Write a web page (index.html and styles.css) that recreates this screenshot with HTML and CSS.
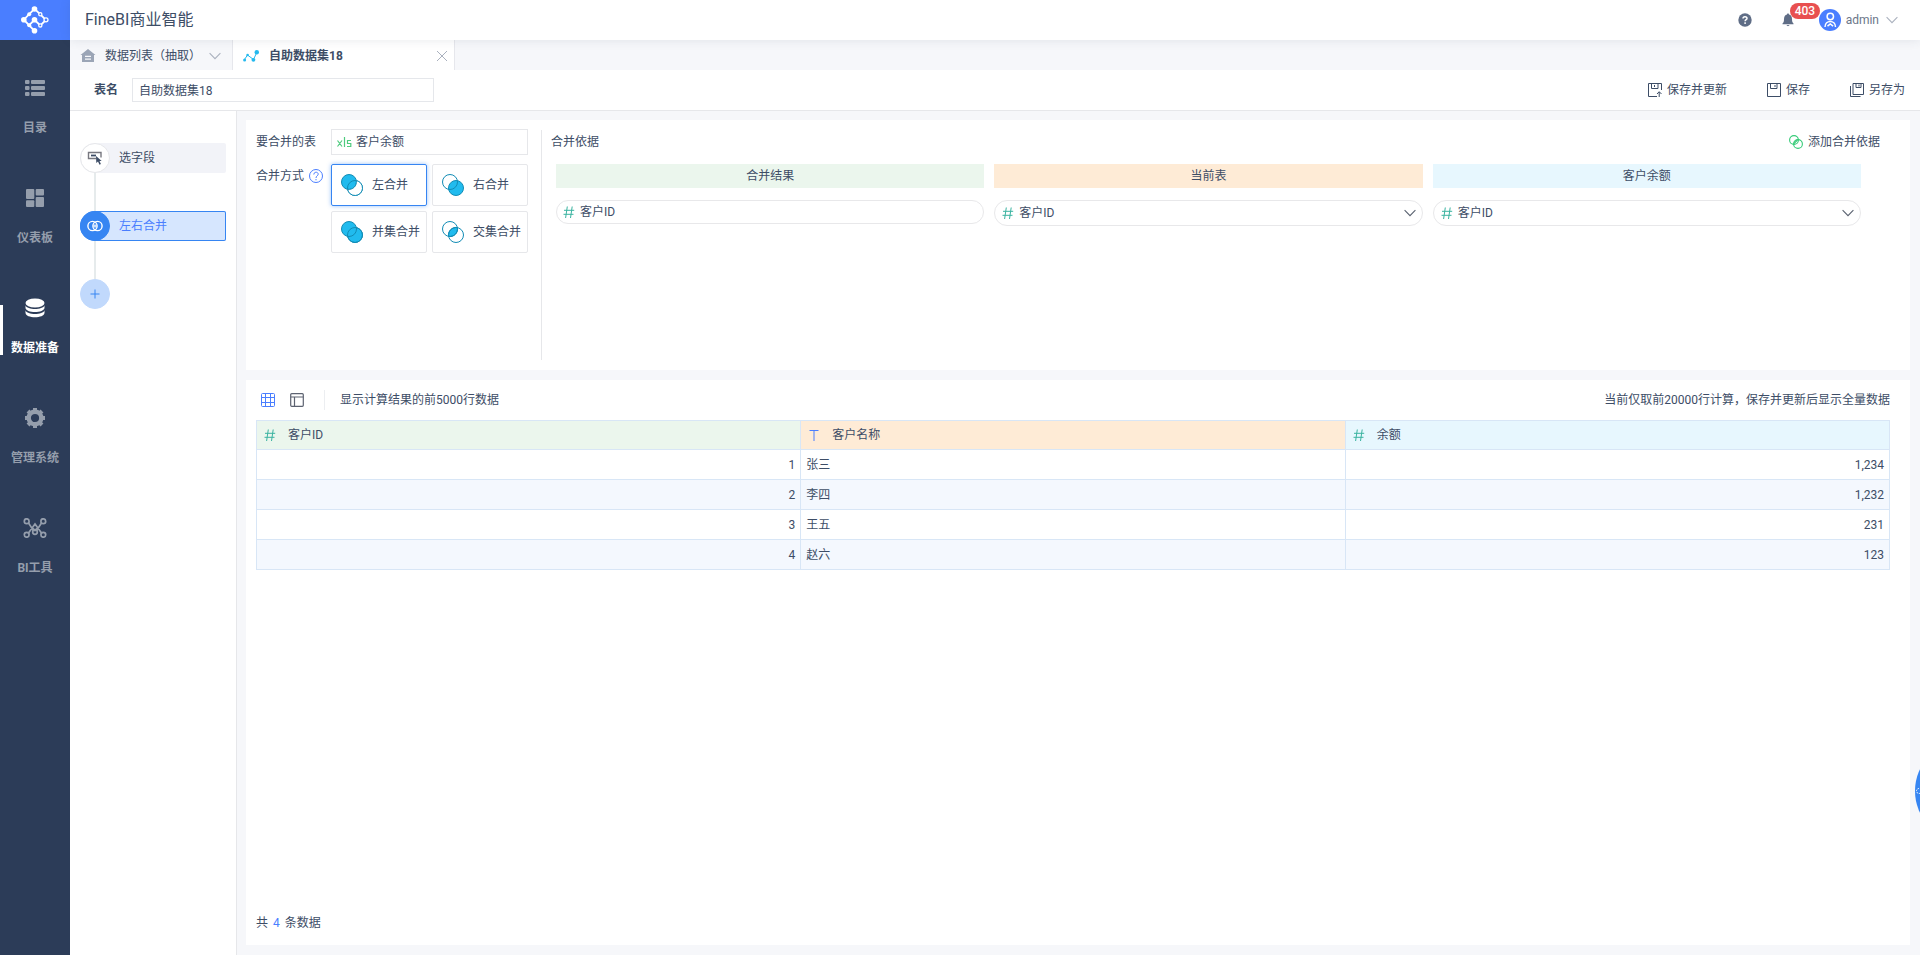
FILE: index.html
```html
<!DOCTYPE html>
<html lang="zh-CN">
<head>
<meta charset="utf-8">
<title>FineBI商业智能</title>
<link rel="stylesheet" href="styles.css">
</head>
<body>
<svg class="defs" aria-hidden="true">
  <symbol id="hash" viewBox="0 0 12 12"><path d="M4.300.500 2.600 12M9.200.500 7.500 12M1 4.300h10.200M.5 8.300h10" fill="none" stroke="currentColor"/></symbol>
  <symbol id="chevron" viewBox="0 0 12 8"><path d="M.6 1.200 6 6.600l5.400-5.400" fill="none" stroke="currentColor" stroke-width="1.100"/></symbol>
</svg>
<div class="app">
  <aside class="sidebar">
    <a class="logo" href="#" aria-label="FineBI">
      <svg width="28" height="28" viewBox="0 0 28 28" fill="none" stroke="#fff" stroke-width="1.800"><path d="M19.300 8.300 13.500 2.800 2.800 13.700 13.500 24.800M19.300 8.300 25 14l-5.700 5.500-5.800-5.700-5.300 5.400"/><g fill="#fff" stroke="none"><circle cx="13.500" cy="3" r="2.800"/><circle cx="8.200" cy="8.300" r="2"/><circle cx="2.800" cy="13.700" r="2.800"/><circle cx="8.200" cy="19.200" r="2"/><circle cx="13.500" cy="24.700" r="2.800"/><circle cx="13.500" cy="13.800" r="2.800"/></g><g fill="#4a7eff" stroke-width="1.300"><circle cx="19.300" cy="8.300" r="1.600"/><circle cx="25" cy="13.800" r="2"/><circle cx="19.300" cy="19.400" r="1.600"/></g></svg>
    </a>
    <nav class="nav">
      <a class="nav-item" href="#"><svg width="20" height="16" viewBox="0 0 20 16" fill="currentColor"><rect width="4.500" height="4" rx="1"/><rect x="6" width="14" height="4" rx="1"/><rect y="6" width="4.500" height="4" rx="1"/><rect x="6" y="6" width="14" height="4" rx="1"/><rect y="12" width="4.500" height="4" rx="1"/><rect x="6" y="12" width="14" height="4" rx="1"/></svg><span>目录</span></a>
      <a class="nav-item" href="#"><svg width="18" height="18" viewBox="0 0 18 18" fill="currentColor"><rect width="8.300" height="10" rx="1"/><rect x="9.700" width="8.300" height="6.500" rx="1"/><rect y="11.300" width="8.300" height="6.700" rx="1"/><rect x="9.700" y="8" width="8.300" height="10" rx="1"/></svg><span>仪表板</span></a>
      <a class="nav-item active" href="#"><svg width="20" height="20" viewBox="0 0 20 20" fill="currentColor"><ellipse cx="10" cy="5" rx="9.500" ry="4.600"/><path d="M.5 7.200C2 12.300 18 12.300 19.500 7.200v2.600c0 5.700-19 5.700-19 0z"/><path d="M.5 12.200c1.500 5.100 17.500 5.100 19 0v2.600c0 6-19 6-19 0z"/></svg><span>数据准备</span></a>
      <a class="nav-item" href="#"><svg width="20" height="20" viewBox="0 0 20 20"><circle cx="10" cy="10" r="6.300" fill="none" stroke="currentColor" stroke-width="4.400"/><path d="M10 0v3M10 17v3M0 10h3M17 10h3M3 3l2 2M15 15l2 2M3 17l2-2M15 5l2-2" stroke="currentColor" stroke-width="4"/></svg><span>管理系统</span></a>
      <a class="nav-item" href="#"><svg width="24" height="20" viewBox="0 0 24 20" fill="none" stroke="currentColor" stroke-width="1.700"><circle cx="3.700" cy="3.200" r="2.400"/><circle cx="20.300" cy="3.200" r="2.400"/><circle cx="3.700" cy="16.800" r="2.400"/><circle cx="20.300" cy="16.800" r="2.400"/><circle cx="12" cy="14" r="2.300"/><path d="M5.500 5 10.300 12.400M18.500 5 13.700 12.400M5.500 15l6.500-9 6.500 9M9 9.500l3 3 3-3"/></svg><span>BI工具</span></a>
    </nav>
  </aside>
  <div class="main">
    <header class="header">
      <h1>FineBI商业智能</h1>
      <div class="account">
        <button class="icon-btn help" aria-label="帮助"><svg width="14" height="14" viewBox="0 0 14 14"><circle cx="7" cy="7" r="6.700" fill="#5f6d86"/><path d="M5 5.600c0-2.500 4-2.500 4-.2C9 6.700 7.100 6.700 7.100 8.300" fill="none" stroke="#fff" stroke-width="1.500"/><rect x="6.300" y="9.300" width="1.600" height="1.600" fill="#fff"/></svg></button>
        <button class="icon-btn bell" aria-label="消息"><svg width="12" height="14" viewBox="0 0 12 14" fill="#5f6d86"><path d="M6 .5c.8 0 1 .6 1 1 2 .5 3 2.200 3 4.500 0 2.700.5 3.500 1.500 4.500v.8H.5v-.8C1.500 9.500 2 8.700 2 6c0-2.300 1-4 3-4.500 0-.4.2-1 1-1zM4.300 12h3.400L6 13.200z"/></svg><span class="badge">403</span></button>
        <button class="user"><svg width="22" height="22" viewBox="0 0 22 22"><circle cx="11" cy="11" r="11" fill="#4a7eff"/><g fill="none" stroke="#fff" stroke-width="1.500"><circle cx="11.300" cy="7.500" r="3.200"/><path d="M6 18c0-7.500 10.500-7.500 10.500 0M8.500 17.200l2.800-2.300 2.800 2.300"/></g></svg><span>admin</span><svg class="muted" width="12" height="8"><use href="#chevron"/></svg></button>
      </div>
    </header>
    <div class="tabs">
      <button class="tab"><svg width="16" height="14" viewBox="0 0 16 14"><path d="M8 0 15.500 6H14v7H2V6H.5z" fill="#9ba5b6"/><path d="M5 7.300h6M5 10.200h6" stroke="#f6f7fa" stroke-width="1.200"/></svg><span>数据列表（抽取）</span><svg class="muted" width="12" height="8"><use href="#chevron"/></svg></button>
      <button class="tab current"><svg width="16" height="12" viewBox="0 0 16 12"><path d="M1.500 9.500 4.500 5l6 4.500L14 2" fill="none" stroke="#24b9ee"/><g fill="#24b9ee"><circle cx="1.600" cy="10" r="1.500"/><circle cx="4.600" cy="5" r="1.300"/><circle cx="10.400" cy="9.800" r="1.900"/><circle cx="13.800" cy="2.200" r="2.200"/></g></svg><span>自助数据集18</span><svg class="muted close" width="12" height="12" viewBox="0 0 12 12"><path d="m1 1 10 10M11 1 1 11" stroke="currentColor"/></svg></button>
    </div>
    <div class="toolbar">
      <label for="name">表名</label>
      <input id="name" type="text" value="自助数据集18">
      <div class="actions">
        <button><svg width="14" height="14" viewBox="0 0 14 14" fill="none" stroke="currentColor"><path d="M9 13.500H.5V.5h13V7M3.500.5v5H10v-5M6.500 2v2M11.200 14V9M9 11l2.200-2.300 2.300 2.300"/></svg>保存并更新</button>
        <button><svg width="14" height="14" viewBox="0 0 14 14" fill="none" stroke="currentColor"><path d="M.5.5h13v13H.5zM3.500.5v5H10v-5M8 2v2"/></svg>保存</button>
        <button><svg width="14" height="14" viewBox="0 0 14 14" fill="none" stroke="currentColor"><path d="M3 .5h10.500v11H3zM6 .5v4h5v-4M9 1.500v2M.5 3v10.500h10"/></svg>另存为</button>
      </div>
    </div>
    <div class="body">
      <aside class="steps">
        <button class="step"><i><svg width="16" height="14" viewBox="0 0 16 14"><path d="M9 7.500H1.500v-6h12.500v5" fill="none" stroke="#77777f" stroke-width="1.400"/><path d="M4 4.500h5" stroke="#3d4d66" stroke-width="1.800"/><path d="m9 5 .3 7 1.700-1.500 1.500 3.200 1.400-.7-1.400-3h2.200z" fill="#3d4d66"/></svg></i><span>选字段</span></button>
        <button class="step selected"><i><svg width="16" height="12" viewBox="0 0 16 12" fill="none" stroke="#fff" stroke-width="1.400"><circle cx="5.500" cy="6" r="4.600"/><circle cx="10.500" cy="6" r="4.600"/><path d="M6.300 6h3.400M8 4.300v3.400" stroke-width="1"/></svg></i><span>左右合并</span></button>
        <button class="step add" aria-label="添加步骤"><i><svg width="10" height="10" viewBox="0 0 10 10"><path d="M5 .5v9M.5 5h9" stroke="#3685f2"/></svg></i></button>
      </aside>
      <main class="content">
        <section class="panel merge">
          <div class="form">
            <label for="table">要合并的表</label>
            <div class="table-box"><svg width="15" height="12" viewBox="0 0 15 12" fill="none" stroke="#4fcb7f" stroke-width="1.200"><path d="m.5 4.500 4.500 6M5 4.500l-4.500 6M7.500 1v10M14 4.500h-3.500v3h3.300v3H10"/></svg><input id="table" type="text" value="客户余额" readonly></div>
            <div class="mode-label">合并方式<button class="icon-btn" aria-label="说明"><svg width="14" height="14" viewBox="0 0 14 14" fill="none" stroke="#4a7eff"><circle cx="7" cy="7" r="6.500"/><path d="M4.800 5.500c0-3 4.400-3 4.400-.3C9.200 6.800 7 6.800 7 9M7 10v1.300"/></svg></button></div>
            <div class="modes">
              <button class="on"><svg width="22" height="22" viewBox="0 0 22 22" fill="none" stroke="#128cb5"><circle cx="8" cy="8" r="7.500" fill="#21bbee"/><circle cx="14" cy="14" r="7.500"/><path d="M15.300 6.600a7.500 7.500 0 1 1-8.700 8.700A7.500 7.500 0 0 0 15.300 6.600z" fill="#fff"/></svg>左合并</button>
              <button><svg width="22" height="22" viewBox="0 0 22 22" fill="none" stroke="#128cb5"><circle cx="14" cy="14" r="7.500" fill="#21bbee"/><circle cx="8" cy="8" r="7.500"/></svg>右合并</button>
              <button><svg width="22" height="22" viewBox="0 0 22 22" fill="none" stroke="#128cb5"><circle cx="14" cy="14" r="7.500" fill="#21bbee"/><circle cx="8" cy="8" r="7.500" fill="#21bbee"/><circle cx="14" cy="14" r="7.500"/></svg>并集合并</button>
              <button><svg width="22" height="22" viewBox="0 0 22 22" fill="none" stroke="#128cb5"><path d="M15.400 6.600a7.500 7.500 0 0 1-8.800 8.800 7.500 7.500 0 0 1 8.800-8.800z" fill="#21bbee"/><circle cx="14" cy="14" r="7.500"/><circle cx="8" cy="8" r="7.500"/></svg>交集合并</button>
            </div>
          </div>
          <div class="basis">
            <div class="basis-head"><span>合并依据</span><button><svg width="14" height="14" viewBox="0 0 14 14" fill="none" stroke="#36cb78" stroke-width="1.100"><circle cx="5" cy="5" r="4.400"/><circle cx="9" cy="9" r="4.400"/><path d="m5 8.500 3.500-3.500"/></svg>添加合并依据</button></div>
            <div class="columns">
              <div class="col"><div class="caption green">合并结果</div><div class="pill fixed"><svg class="hash" width="12" height="12"><use href="#hash"/></svg><span>客户ID</span></div></div>
              <div class="col"><label class="caption orange" for="left">当前表</label><div class="pill"><svg class="hash" width="12" height="12"><use href="#hash"/></svg><select id="left"><option>客户ID</option></select><svg class="arrow" width="12" height="8"><use href="#chevron"/></svg></div></div>
              <div class="col"><label class="caption blue" for="right">客户余额</label><div class="pill"><svg class="hash" width="12" height="12"><use href="#hash"/></svg><select id="right"><option>客户ID</option></select><svg class="arrow" width="12" height="8"><use href="#chevron"/></svg></div></div>
            </div>
          </div>
        </section>
        <section class="panel data">
          <div class="data-head">
            <button class="icon-btn" aria-label="表格视图"><svg width="14" height="14" viewBox="0 0 14 14" fill="none" stroke="#4a7eff"><rect x=".5" y=".5" width="13" height="13" rx="1"/><path d="M4.500.5v13M9.500.5v13M.5 4.500h13M.5 9.500h13"/></svg></button>
            <button class="icon-btn" aria-label="结构视图"><svg width="14" height="14" viewBox="0 0 14 14" fill="none" stroke="#5c6270" stroke-width="1.200"><rect x=".7" y=".7" width="12.600" height="12.600" rx="1"/><path d="M.7 4h12.600M4.500 4v9.300"/></svg></button>
            <span class="count">显示计算结果的前5000行数据</span>
            <span class="note">当前仅取前20000行计算，保存并更新后显示全量数据</span>
          </div>
          <table>
            <thead><tr>
              <th class="green"><span><svg class="hash" width="12" height="12"><use href="#hash"/></svg>客户ID</span></th>
              <th class="orange"><span><svg width="12" height="12" viewBox="0 0 12 12"><path d="M1.500 1.500h9M6 1.500V12" stroke="#4a7eff" fill="none"/></svg>客户名称</span></th>
              <th class="blue"><span><svg class="hash" width="12" height="12"><use href="#hash"/></svg>余额</span></th>
            </tr></thead>
            <tbody>
              <tr><td class="num">1</td><td>张三</td><td class="num">1,234</td></tr>
              <tr><td class="num">2</td><td>李四</td><td class="num">1,232</td></tr>
              <tr><td class="num">3</td><td>王五</td><td class="num">231</td></tr>
              <tr><td class="num">4</td><td>赵六</td><td class="num">123</td></tr>
            </tbody>
          </table>
          <div class="total">共<b>4</b>条数据</div>
        </section>
      </main>
    </div>
  </div>
</div>
<button class="float" aria-label="客服"><svg width="10" height="8" viewBox="0 0 10 8"><circle cx="4" cy="4" r="2.500" fill="none" stroke="#fff" stroke-dasharray="1.500 1"/></svg></button>
</body>
</html>
```
FILE: styles.css
```css
* { box-sizing: border-box; }
body { margin: 0; overflow: hidden; color: #3d4d66; font: 12px/18px Roboto, "Noto Sans CJK SC", sans-serif; }
button, input, select { font: inherit; color: inherit; margin: 0; padding: 0; border: 0; background: none; outline: 0; }
button { display: flex; align-items: center; cursor: pointer; white-space: nowrap; }
svg { display: block; flex: none; }
a { color: inherit; text-decoration: none; }
i { font-style: normal; }
.defs { position: absolute; width: 0; height: 0; }
.app { display: flex; min-height: 100vh; }
.main { flex: 1; min-width: 0; display: flex; flex-direction: column; }

.sidebar { width: 70px; flex: none; background: #2c3c58; }
.logo { display: flex; align-items: center; justify-content: center; height: 40px; background: #4a7eff; }
.nav { padding-top: 15px; }
.nav-item { display: flex; flex-direction: column; align-items: center; height: 110px; padding-top: 23px; color: #959eac; font-weight: 700; }
.nav-item svg { height: 20px; margin-bottom: 21px; }
.nav-item.active { color: #fff; background: linear-gradient(#fff, #fff) 0 30px / 3px 50px no-repeat; }

.header { z-index: 1; display: flex; align-items: center; justify-content: space-between; height: 40px; padding: 0 22px 0 15px; background: #fff; box-shadow: 0 0 10px rgba(61, 77, 102, .12); }
h1 { margin: 0; font-size: 16px; line-height: 24px; font-weight: 400; }
.account { display: flex; align-items: center; }
.help { margin-right: 30px; }
.bell { position: relative; margin-right: 25px; }
.badge { position: absolute; left: 8px; top: -10px; height: 16px; padding: 0 5px; border-radius: 8px; background: #e85050; color: #fff; line-height: 16px; font-weight: 500; }
.user { gap: 5px; color: #6b7689; }
.user .muted { margin-left: 2px; }
.muted { color: #aab1be; }

.tabs { display: flex; height: 30px; background: #f6f7fa; }
.tab { gap: 9px; border-right: 1px solid #e6e7ec; padding: 1px 11px 0 10px; }
.tab svg.muted:not(.close) { margin-left: -1px; }
.tab.current { width: 222px; padding: 1px 6px 0 10px; gap: 10px; background: #fff; font-weight: 700; }
.close { margin-left: auto; }

.toolbar { display: flex; align-items: center; height: 41px; padding: 0 15px 0 24px; background: #fff; border-bottom: 1px solid #e6e7ea; }
.toolbar label { font-weight: 700; margin-right: 14px; }
.toolbar input { width: 302px; height: 24px; border: 1px solid #e5e7eb; padding: 0 6px 2px; }
.actions { display: flex; gap: 40px; margin-left: auto; }
.actions button { gap: 5px; }

.body { flex: 1; display: flex; background: #f6f7fa; }
.steps { width: 167px; flex: none; display: flex; flex-direction: column; gap: 38px; padding: 32px 10px; background: #fff; border-right: 1px solid #e6e7ea; }
.step { position: relative; height: 30px; gap: 9px; border-radius: 15px 2px 2px 15px; background: #f2f3f8; }
.step i { display: flex; align-items: center; justify-content: center; width: 30px; height: 30px; border: 1px solid #e6e7ea; border-radius: 50%; background: #fff; }
.step:not(.add)::after { content: ""; position: absolute; left: 14px; top: 30px; width: 2px; height: 38px; background: #e6ebec; }
.step.selected { background: #d6e6fe; color: #4a7eff; box-shadow: inset 0 0 0 1px #3685f2; }
.selected i { background: #3685f2; border-color: #3685f2; }
.step.add { width: 30px; background: none; }
.add i { background: #c1d9fc; border-color: #c1d9fc; }

.content { flex: 1; min-width: 0; display: flex; flex-direction: column; gap: 10px; padding: 9px 10px 10px 9px; }
.panel { background: #fff; }
.merge { display: flex; min-height: 250px; padding: 10px; }
.form { display: grid; grid-template-columns: 75px 197px; grid-template-rows: 26px auto; row-gap: 8px; align-content: start; padding-right: 13px; border-right: 1px solid #e6e7ea; }
.form label { line-height: 24px; }
.table-box { display: flex; align-items: center; height: 26px; margin-top: -1px; padding-left: 5px; gap: 4px; border: 1px solid #e6e7ea; }
.table-box input { flex: 1; min-width: 0; }
.mode-label { display: flex; align-items: center; align-self: start; gap: 5px; height: 24px; }
.modes { display: grid; grid-template-columns: 1fr 1fr; gap: 5px; }
.modes button { height: 42px; padding-left: 9px; gap: 9px; border: 1px solid #e6e7ea; border-radius: 2px; }
.modes .on { border-color: #3685f2; box-shadow: 0 0 4px rgba(54, 133, 242, .5); }
.basis { flex: 1; padding: 0 20px 0 9px; }
.basis-head { display: flex; justify-content: space-between; height: 24px; align-items: center; }
.basis-head button { gap: 5px; }
.columns { display: grid; grid-template-columns: repeat(3, 1fr); gap: 10px; margin: 10px 19px 0 5px; }
.caption { display: block; height: 24px; margin-bottom: 12px; line-height: 24px; text-align: center; }
.green { background: #ebf6ed; }
.orange { background: #feebd6; }
.blue { background: #e7f7fe; }
.pill { position: relative; display: flex; align-items: center; gap: 5px; height: 26px; padding-left: 7px; border: 1px solid #e8e8ea; border-radius: 13px; }
.pill.fixed { height: 24px; padding-left: 6px; }
.pill select { flex: 1; height: 24px; appearance: none; cursor: pointer; }
.hash { color: #3ab3a0; }
.arrow { position: absolute; right: 6px; color: #59616f; pointer-events: none; }

.data { flex: 1; display: flex; flex-direction: column; padding: 10px 20px 12px 10px; }
.data-head { display: flex; align-items: center; height: 20px; padding-left: 5px; margin-bottom: 10px; }
.data-head .icon-btn { margin-right: 15px; }
.count { margin-left: 5px; padding-left: 15px; border-left: 1px solid #eceef1; line-height: 20px; }
.note { margin-left: auto; }
table { width: 100%; table-layout: fixed; border-collapse: collapse; }
th, td { height: 30px; padding: 0 5px; border: 1px solid #d8e6f6; text-align: left; font-weight: 400; }
th { height: 29px; padding: 0 7px; }
th span { display: flex; align-items: center; gap: 12px; }
.num { text-align: right; }
tbody tr:nth-child(even) { background: #f4f8fe; }
.total { margin-top: auto; line-height: 20px; }
.total b { margin: 0 5px; color: #4a7eff; font-weight: 400; }
.float { position: fixed; right: -95px; top: 741px; width: 100px; height: 100px; border-radius: 50%; background: #3685f2; }
```
